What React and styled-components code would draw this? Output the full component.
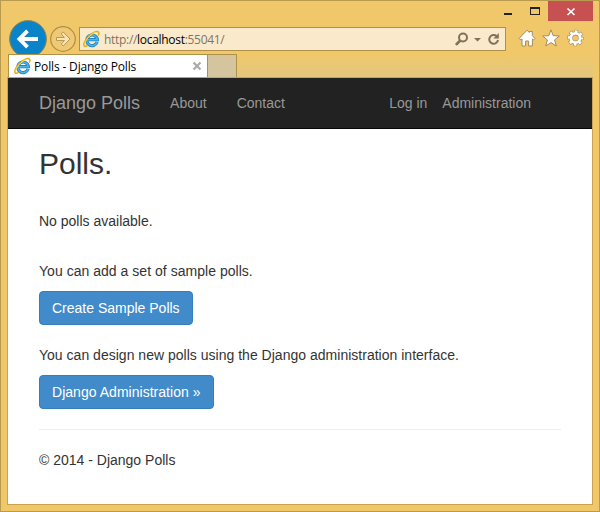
import React from 'react';
import styled, { createGlobalStyle } from 'styled-components';

const Global = createGlobalStyle`
  *, *::before, *::after { box-sizing: border-box; }
  body { margin: 0; overflow: hidden; }
  p, h1 { margin: 0; }
  svg { display: block; flex: none; }
`;

const Window = styled.div`
  width: 600px;
  height: 512px;
  display: grid;
  grid-template-rows: 20px 33px 23px 428px;
  padding: 0 6px 6px;
  background: #f0c869;
  border: 1px solid #b89a50;
`;

const TitleBar = styled.div`
  display: flex;
  justify-content: flex-end;
`;

const CaptionButton = styled.button`
  width: ${(p) => p.$width}px;
  height: 20px;
  padding: 0;
  border: 0;
  background: ${(p) => (p.$danger ? '#c75050' : 'transparent')};
`;

const Toolbar = styled.div`
  display: flex;
  align-items: flex-start;
`;

const BackForward = styled.svg`
  margin-top: -1px;
`;

const AddressBar = styled.div`
  width: 427px;
  height: 24px;
  margin: 6px 12px 0 2px;
  padding: 0 5px 0 3px;
  display: flex;
  align-items: center;
  background: #faeacb;
  border: 1px solid #b0914a;
`;

const Url = styled.span`
  flex: 1;
  margin-left: 4px;
  padding-top: 2px;
  font: 12px/22px 'Open Sans', sans-serif;
  letter-spacing: -0.3px;
  color: #7c7565;
  white-space: nowrap;
`;

const Host = styled.span`
  color: #000;
`;

const ToolIcons = styled.div`
  display: flex;
  gap: 6px;
  margin-top: 7px;
`;

const TabStrip = styled.div`
  display: flex;
  padding-left: 1px;
  background: linear-gradient(#f0c869, #e2c780);
`;

const Tab = styled.div`
  width: 200px;
  height: 23px;
  display: flex;
  align-items: center;
  padding: 0 5px 0 5px;
  background: #fff;
  border: solid #b0914a;
  border-width: 1px 1px 0 1px;
`;

const TabTitle = styled.span`
  flex: 1;
  margin-left: 3px;
  padding-top: 2px;
  font: 12px/22px 'Open Sans', sans-serif;
  letter-spacing: -0.15px;
  color: #000;
  white-space: nowrap;
`;

const NewTab = styled.div`
  width: 29px;
  height: 23px;
  background: #d5c59e;
  border: solid #b0914a;
  border-width: 1px 1px 0 0;
`;

const Page = styled.main`
  border: 1px solid #c9a34e;
  background: #fff;
  font: 14px/20px 'Liberation Sans', Arial, sans-serif;
  color: #333;
`;

const Navbar = styled.nav`
  height: 51px;
  display: flex;
  align-items: center;
  padding: 0 61px 0 31px;
  background: #222;
  border-bottom: 1px solid #080808;
`;

const Brand = styled.a`
  font-size: 18px;
  color: #999;
  margin-right: 30px;
`;

const NavLink = styled.a`
  color: #999;
  margin-right: ${(p) => p.$gap || 0}px;
`;

const Spacer = styled.div`
  flex: 1;
`;

const Content = styled.div`
  padding: 15px 31px 0;
`;

const Heading = styled.h1`
  font-size: 30px;
  line-height: 40px;
  font-weight: 400;
  margin-bottom: 27px;
`;

const Paragraph = styled.p`
  margin-bottom: ${(p) => p.$after}px;
  letter-spacing: ${(p) => p.$tracking || 0}px;
`;

const Button = styled.button`
  display: block;
  width: ${(p) => p.$width}px;
  height: 34px;
  padding: 0 12px;
  margin-bottom: 20px;
  border: 1px solid #357ebd;
  border-radius: 4px;
  background: #428bca;
  color: #fff;
  font: inherit;
  text-align: left;
  letter-spacing: ${(p) => p.$tracking || 0}px;
  white-space: nowrap;
`;

const Divider = styled.hr`
  margin: 0 0 20px;
  border: 0;
  border-top: 1px solid #eee;
`;

const IELogo = () => (
  <svg width="17" height="18" viewBox="0 0 17 18" fill="none">
    <path d="M14.2 11.9A5.3 5.3 0 1 1 14.4 9.7H4.8" stroke="#2385c4" strokeWidth="3.2" />
    <path d="M14.2 11.9A5.3 5.3 0 1 1 14.4 9.7H4.8" stroke="#4bb4e8" strokeWidth="1.5" />
    <path d="M4.6 15.4C1 17.9-.2 14.8 2.1 10.9 5.4 5.2 12.5.1 15.2 1.8 16.2 2.5 15.9 4.2 15.1 5.7" stroke="#e9ae17" strokeWidth="1.6" />
    <path d="M1.9 14.4C1.3 11.3 7.5 3.8 13 2.2" stroke="#ffe16a" strokeWidth=".8" />
  </svg>
);

const Minimize = () => (
  <svg width="26" height="20" shapeRendering="crispEdges"><path d="M8 12h8v2H8z" fill="#222" /></svg>
);

const Maximize = () => (
  <svg width="26" height="20" shapeRendering="crispEdges">
    <path d="M8 6h10v8H8zM9 8v5h8V8z" fill="#222" fillRule="evenodd" />
  </svg>
);

const Close = () => (
  <svg width="45" height="20"><path d="M19.5 7.5l7 6.5M26.5 7.5l-7 6.5" stroke="#fff" strokeWidth="1.7" /></svg>
);

const NavigationButtons = () => (
  <BackForward width="70" height="34" viewBox="7 20 70 34">
    <circle cx="28" cy="39" r="18.4" fill="#0a84c8" stroke="#9b8147" />
    <path d="M38 39H19.5M27.5 30.8L19.4 39l8.1 8.2" fill="none" stroke="#fff" strokeWidth="3.8" />
    <circle cx="63" cy="39" r="12.3" fill="#efc975" stroke="#b28e43" strokeWidth="1.2" />
    <path d="M56.5 37.5h8l-3.3-3.6 2-1.9 6.8 7-6.8 7-2-1.9 3.3-3.6h-8z" fill="#fbe5b4" stroke="#b99a56" strokeWidth="1" />
  </BackForward>
);

const AddressActions = () => (
  <svg width="46" height="22" viewBox="454 28 46 22" fill="none" stroke="#80725a">
    <circle cx="463" cy="37.5" r="4" strokeWidth="2" />
    <path d="M460.2 40.5l-4.3 4.4" strokeWidth="2.7" />
    <path d="M474 38h7l-3.5 3.5z" fill="#80725a" stroke="none" />
    <path d="M496.5 36A4.4 4.4 0 1 0 498 40" strokeWidth="2" />
    <path d="M498.8 33v5.4h-5.4z" fill="#80725a" stroke="none" />
  </svg>
);

const Home = () => (
  <svg width="18" height="20" viewBox="518 28 18 20">
    <path d="M527 30.2l2.4 2.3v-1h2.9v4.1l2.7 2.8-1.4 1.6-1.2-1v7h-3.8V41h-3v5H522v-7l-1.2 1-1.6-1.6z" fill="#fff" stroke="#a28d61" />
  </svg>
);

const Star = () => (
  <svg width="18" height="20" viewBox="542.5 28 18 20">
    <path d="M551.5 29.8l2.2 5.9 6.1.3-4.7 3.9 1.7 6.1-5.3-3.4-5.3 3.4 1.7-6.1-4.7-3.9 6.1-.3z" fill="#fff" stroke="#a28d61" />
  </svg>
);

const Gear = () => (
  <svg width="18" height="20" viewBox="566.5 28 18 20" fill="none">
    <circle cx="576" cy="38" r="6.4" stroke="#a28d61" strokeWidth="3.8" strokeDasharray="3.3 1.727" strokeDashoffset="1.65" />
    <circle cx="576" cy="38" r="4.6" stroke="#a28d61" strokeWidth="4" />
    <circle cx="576" cy="38" r="6.3" stroke="#fff" strokeWidth="2.8" strokeDasharray="2.4 2.548" strokeDashoffset="1.2" />
    <circle cx="576" cy="38" r="4.6" stroke="#fff" strokeWidth="2.8" />
  </svg>
);

const TabClose = () => (
  <svg width="10" height="10"><path d="M1.5 1.5l7 7M8.5 1.5l-7 7" stroke="#aaa" strokeWidth="2.2" /></svg>
);

export default function App() {
  return (
    <>
      <Global />
      <Window>
        <TitleBar>
          <CaptionButton $width={26} aria-label="Minimize"><Minimize /></CaptionButton>
          <CaptionButton $width={26} aria-label="Maximize"><Maximize /></CaptionButton>
          <CaptionButton $width={45} $danger aria-label="Close"><Close /></CaptionButton>
        </TitleBar>
        <Toolbar>
          <NavigationButtons />
          <AddressBar>
            <IELogo />
            <Url>http://<Host>localhost</Host>:55041/</Url>
            <AddressActions />
          </AddressBar>
          <ToolIcons><Home /><Star /><Gear /></ToolIcons>
        </Toolbar>
        <TabStrip>
          <Tab>
            <IELogo />
            <TabTitle>Polls - Django Polls</TabTitle>
            <TabClose />
          </Tab>
          <NewTab />
        </TabStrip>
        <Page>
          <Navbar>
            <Brand>Django Polls</Brand>
            <NavLink $gap={30}>About</NavLink>
            <NavLink>Contact</NavLink>
            <Spacer />
            <NavLink $gap={15}>Log in</NavLink>
            <NavLink>Administration</NavLink>
          </Navbar>
          <Content>
            <Heading>Polls.</Heading>
            <Paragraph $after={30}>No polls available.</Paragraph>
            <Paragraph $after={10} $tracking={0.03}>You can add a set of sample polls.</Paragraph>
            <Button $width={154}>Create Sample Polls</Button>
            <Paragraph $after={10} $tracking={0.015}>You can design new polls using the Django administration interface.</Paragraph>
            <Button $width={175} $tracking={0.03}>Django Administration »</Button>
            <Divider />
            <Paragraph $after={0}>© 2014 - Django Polls</Paragraph>
          </Content>
        </Page>
      </Window>
    </>
  );
}
